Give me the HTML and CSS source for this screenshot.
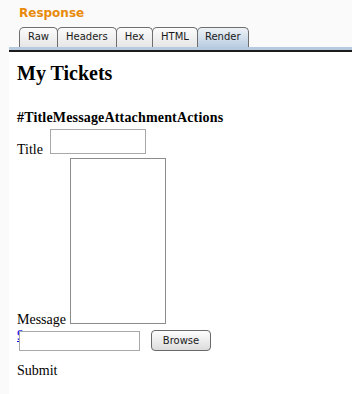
FILE: index.html
```html
<!DOCTYPE html>
<html lang="en">
<head>
    <meta charset="UTF-8">
    <meta name="viewport" content="width=device-width, initial-scale=1.0">
    <title>Response - Render</title>
    <link rel="stylesheet" href="styles.css">
</head>
<body>
    <div class="header">
        <div class="pane-title">Response</div>
    </div>
    <div class="panel">
        <div class="tabs">
            <div class="tab">Raw</div>
            <div class="tab">Headers</div>
            <div class="tab">Hex</div>
            <div class="tab">HTML</div>
            <div class="tab active">Render</div>
        </div>
        <div class="tab-rule"></div>
        <div class="content">
            <h2 class="page-title">My Tickets</h2>
            <div class="cols">#TitleMessageAttachmentActions</div>
            <form class="ticket-form">
                <div class="row">Title <input class="title-input" type="text"></div>
                <div class="row">Message <textarea class="message-input"></textarea></div>
                <div class="file-row"><a class="attach" href="#">9</a><input class="file-name" type="text"><button class="browse" type="button">Browse</button></div>
                <div class="submit">Submit</div>
            </form>
        </div>
    </div>
</body>
</html>
```

FILE: styles.css
```css
body {
    margin: 0;
    background-color: #fafafa;
    font-family: 'DejaVu Sans', sans-serif;
    height: 394px;
    overflow: hidden;
}

.header {
    padding: 6px 0 0 19px;
}

.pane-title {
    color: #e88a0c;
    font-size: 12px;
    font-weight: bold;
    line-height: 14px;
}

.panel {
    margin: 7px 0 0 9px;
}

.tabs {
    display: flex;
    padding-left: 10px;
}

.tab {
    font-size: 10px;
    line-height: 18px;
    padding: 0 8px 1px;
    color: #1a1a1a;
    border: 1px solid #6e6e6e;
    border-bottom: none;
    border-radius: 5px 5px 0 0;
    margin-right: -1px;
    background: linear-gradient(#fbfbfb, #e6e6e6);
}

.tab.active {
    padding: 0 7px 1px;
    background: linear-gradient(#eef2f6, #b9cde1);
}

.tab-rule {
    height: 3px;
    background-color: #b6cadf;
    border-bottom: 2px solid #1c1c1c;
}

.content {
    background-color: #fff;
    height: 342px;
    padding: 10px 8px 0;
    font-family: 'Liberation Serif', serif;
    font-size: 14px;
    color: #000;
}

.page-title {
    font-size: 20px;
    margin: 0 0 25px;
}

.cols {
    font-weight: bold;
    letter-spacing: 0.17px;
    margin-bottom: 3px;
}

.ticket-form {
    margin: 0;
}

.title-input,
.message-input {
    box-sizing: border-box;
    margin: 0 0 3px 0;
    padding: 0;
    vertical-align: text-bottom;
    background: #fff;
    border-radius: 0;
}

.title-input {
    width: 96px;
    height: 25px;
    margin-left: 4px;
    border: 1px solid #a8a8a8;
}

.message-input {
    width: 96px;
    height: 166px;
    border: 1px solid #8c8c8c;
    resize: none;
}

.file-row {
    display: flex;
    align-items: flex-start;
    line-height: 16px;
}

.attach {
    color: #0000ee;
}

.file-name {
    box-sizing: border-box;
    width: 121px;
    height: 20px;
    margin: 3px 0 0 -5px;
    padding: 0;
    border: 1px solid #a8a8a8;
    border-radius: 0;
    background: #fff;
}

.browse {
    box-sizing: border-box;
    width: 60px;
    height: 21px;
    margin: 2px 0 0 11px;
    padding: 0;
    font-family: 'DejaVu Sans', sans-serif;
    font-size: 10px;
    color: #1a1a1a;
    border: 1px solid #6a6a6a;
    border-radius: 4px;
    background: linear-gradient(#fdfdfd, #dcdcdc);
}

.submit {
    margin-top: 12px;
}
```
